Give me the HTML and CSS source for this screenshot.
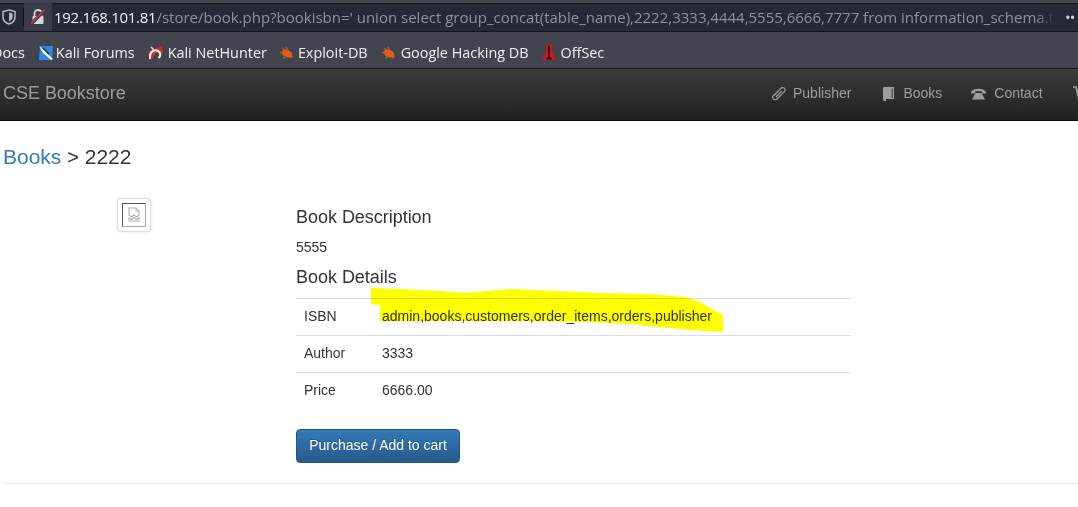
FILE: index.html
```html
<!DOCTYPE html>
<html lang="en">
<head>
<meta charset="utf-8">
<title>CSE Bookstore</title>
<link rel="stylesheet" href="styles.css">
</head>
<body>
<div class="urlbar">
  <svg class="shield" width="14" height="16" viewBox="0 0 14 16"><path d="M7 1 L13 2.5 V8 C13 11.5 10 14 7 15 C4 14 1 11.5 1 8 V2.5 Z" fill="none" stroke="#b9babd" stroke-width="1.5"/><path d="M7 3.6 L10.6 4.4 V8 C10.6 10 9 11.5 7 12.4 Z" fill="#b9babd"/></svg>
  <span class="sep"></span>
  <span class="lockbox">
    <svg width="16" height="18" viewBox="0 0 16 18"><path d="M4.5 8 V5.5 C4.5 3.2 6 2 8 2 C10 2 11.5 3.2 11.5 5.5 V8" fill="none" stroke="#d6d6d8" stroke-width="1.8"/><rect x="2.5" y="8" width="11" height="8" rx="1" fill="#d6d6d8"/><path d="M1 16 L15 2" stroke="#3a3d49" stroke-width="3.2"/><path d="M1 15.5 L15 1.5" stroke="#e22850" stroke-width="1.6"/></svg>
  </span>
  <div class="url"><span class="host">192.168.101.81</span>/store/book.php?bookisbn=' union select group_concat(table_name),2222,3333,4444,5555,6666,7777 from information_schema.ta</div>
  <span class="dots">••</span>
</div>
<div class="bookmarks">
  <span class="bm bm-docs">Docs</span>
  <span class="bm bm-forums">
    <svg width="16" height="16" viewBox="0 0 16 16"><path d="M2 1 H15 L14 15 H1 Z" fill="#2f86e6"/><path d="M1 1 L6 5 L15 14 L13 15 L5 8 Z" fill="#f2f2f2"/><path d="M5 3 L11 9" stroke="#222" stroke-width="1.2"/></svg>
    Kali Forums</span>
  <span class="bm bm-hunter">
    <svg width="16" height="16" viewBox="0 0 16 16"><path d="M1 6 L14 1 L15 9 L9 7 L3 15 L1 12 Z" fill="#d9252c"/><path d="M2 14 C1 7 6 4 10 6 C13 7.5 13 11 10.5 13" fill="none" stroke="#f4f4f4" stroke-width="2"/><path d="M3 2 L6 5" stroke="#ddd" stroke-width="1.4"/></svg>
    Kali NetHunter</span>
  <span class="bm bm-edb">
    <svg width="15" height="14" viewBox="0 0 15 14"><ellipse cx="8" cy="7.5" rx="5.5" ry="3.6" fill="#e0601a" transform="rotate(24 8 7.5)"/><path d="M1 7 L5 6 M3 2 L7 5 M7 1 L9 5 M4 12 L8 10 M11 12 L14 10" stroke="#d8571a" stroke-width="1.1"/></svg>
    Exploit-DB</span>
  <span class="bm bm-ghdb">
    <svg width="15" height="14" viewBox="0 0 15 14"><ellipse cx="8" cy="7.5" rx="5.5" ry="3.6" fill="#e0601a" transform="rotate(24 8 7.5)"/><path d="M1 7 L5 6 M3 2 L7 5 M7 1 L9 5 M4 12 L8 10 M11 12 L14 10" stroke="#d8571a" stroke-width="1.1"/></svg>
    Google Hacking DB</span>
  <span class="bm bm-off">
    <svg width="14" height="18" viewBox="0 0 14 18"><path d="M4 1 H10 L10 8 L14 16 H0 L4 8 Z" fill="#d3141c"/><path d="M7 2 V14 M4.5 14.5 H9.5" stroke="#200" stroke-width="1.8"/></svg>
    OffSec</span>
</div>
<nav class="navbar">
  <a class="brand">CSE Bookstore</a>
  <ul class="navlinks">
    <li class="nav-pub">
      <svg width="15" height="15" viewBox="0 0 15 15"><path d="M3 9.5 L9.5 2.6 C10.8 1.3 12.6 1.3 13.5 2.3 C14.4 3.3 14.2 4.9 13 6.1 L6 13 C5 14 3.4 14 2.4 13 C1.4 12 1.5 10.6 2.4 9.6 L8.8 3.4 M5 11 L11 5" fill="none" stroke="#9d9d9d" stroke-width="1.2"/></svg>
      Publisher</li>
    <li class="nav-books">
      <svg width="13" height="15" viewBox="0 0 13 15"><path d="M1 2 C1 1.2 1.8 1 3 1 H12 V13 H4 V15 H3 C1.8 15 1 14.4 1 13.2 Z" fill="#9d9d9d"/><path d="M9.5 2.5 H11 V12 H9.5 Z" fill="#555"/></svg>
      Books</li>
    <li class="nav-contact">
      <svg width="15" height="13" viewBox="0 0 15 13"><path d="M0 5 C2 0.5 13 0.5 15 5 V6.5 H11 V4.5 C9 3.8 6 3.8 4 4.5 V6.5 H0 Z" fill="#9d9d9d"/><path d="M4.5 6 H10.5 L14 12.5 H1 Z" fill="#9d9d9d"/></svg>
      Contact</li>
    <li class="nav-cart">
      <svg width="15" height="15" viewBox="0 0 15 15"><path d="M0 1 H3 L5 10 H13 L14.5 4 H4" fill="none" stroke="#9d9d9d" stroke-width="1.6"/><circle cx="6" cy="13" r="1.4" fill="#9d9d9d"/><circle cx="12" cy="13" r="1.4" fill="#9d9d9d"/></svg>
    </li>
  </ul>
</nav>
<main class="content">
  <p class="crumb"><a class="crumb-link">Books</a> <span class="crumb-sep">&gt;</span> 2222</p>
  <div class="book">
    <div class="image-col">
      <div class="thumb">
        <span class="broken">
          <svg width="16" height="16" viewBox="0 0 16 16"><path d="M3 1 H10 L13 4 V8 L10.5 10 L8 8 L5.5 10 L3 8 Z M3 11 L5.5 12.5 L8 10.5 L10.5 12.5 L13 10.5 V14 H3 Z" fill="none" stroke="#b4b4b4" stroke-width="1.1"/><path d="M10 1 V4 H13" fill="none" stroke="#b4b4b4" stroke-width="1"/></svg>
        </span>
      </div>
    </div>
    <div class="detail-col">
      <h4 class="h-desc">Book Description</h4>
      <p class="desc">5555</p>
      <h4 class="h-details">Book Details</h4>
      <div class="table-wrap">
        <table class="details">
          <tr><td class="label">ISBN</td><td>admin,books,customers,order_items,orders,publisher</td></tr>
          <tr><td class="label">Author</td><td>3333</td></tr>
          <tr><td class="label">Price</td><td>6666.00</td></tr>
        </table>
        <svg class="marker" width="360" height="50" viewBox="371 288 360 50"><path d="M371 289 L400 290 L440 292 L465 294 L510 290 L560 292 L600 294 L650 295 L685 298 L700 303 L712 310 L723 316 L723 333 L690 331 L660 328 L630 325 L590 323 L520 322 L380 322 L380 306 L371 305 Z" fill="#ffff00"/></svg>
      </div>
      <button class="buy"><span class="buy-label">Purchase / Add to cart</span></button>
    </div>
  </div>
  <hr class="rule">
</main>
</body>
</html>
```

FILE: styles.css
```css
* { box-sizing: border-box; }
html, body { margin: 0; padding: 0; }
body {
  width: 1078px;
  height: 507px;
  overflow: hidden;
  background: #fff;
  font-family: "Liberation Sans", Arial, sans-serif;
  font-size: 14px;
  color: #333;
}
.urlbar {
  height: 32px;
  display: flex;
  align-items: center;
  background: #262936;
  border-top: 3px solid #42454e;
  border-bottom: 1px solid #15161c;
  box-shadow: inset 0 1px 0 #1a1b20;
  font-family: "Open Sans", sans-serif;
  font-size: 15px;
  color: #8f929b;
  white-space: nowrap;
  overflow: hidden;
}
.shield { margin-left: 2px; flex: none; }
.sep { width: 1px; height: 18px; background: #0f1015; margin-left: 7px; flex: none; }
.lockbox {
  width: 28px;
  height: 28px;
  background: #3a3d49;
  display: flex;
  align-items: center;
  justify-content: center;
  flex: none;
}
.url {
  width: 1006px;
  margin-left: 2px;
  overflow: hidden;
  flex: none;
  -webkit-mask-image: linear-gradient(to right, #000 97.5%, transparent 99.5%);
  mask-image: linear-gradient(to right, #000 97.5%, transparent 99.5%);
}
.host { color: #f2f3f5; letter-spacing: -0.27px; }
.dots { margin-left: 5px; color: #d0d1d5; font-size: 15px; letter-spacing: -1px; flex: none; }
.bookmarks {
  height: 37px;
  display: flex;
  align-items: center;
  padding-top: 5px;
  background: #42454e;
  border-bottom: 1px solid #15161c;
  font-family: "Open Sans", sans-serif;
  font-size: 14.4px;
  color: #f0f1f3;
  white-space: nowrap;
  overflow: hidden;
}
.bm { display: flex; align-items: center; gap: 2px; flex: none; }
.bm-docs { margin-left: -8px; }
.bm-forums { margin-left: 13px; }
.bm-hunter { margin-left: 13px; gap: 4px; }
.bm-edb { margin-left: 12px; gap: 4px; }
.bm-ghdb { margin-left: 13px; gap: 5px; }
.bm-off { margin-left: 13px; gap: 5px; }
.navbar {
  height: 52px;
  display: flex;
  align-items: center;
  justify-content: space-between;
  padding-bottom: 3px;
  background: linear-gradient(to bottom, #3c3c3c, #222);
  border-bottom: 1px solid #0c0c0c;
  color: #9d9d9d;
  overflow: hidden;
}
.brand { margin-left: 3px; font-size: 18px; letter-spacing: -0.03px; }
.navlinks { list-style: none; display: flex; align-items: center; margin: 0; padding: 0; width: 307px; flex: none; }
.navlinks li { display: flex; align-items: center; gap: 7px; flex: none; }
.nav-books { margin-left: 31px; gap: 8px !important; }
.nav-contact { margin-left: 29px; gap: 8px !important; }
.nav-cart { margin-left: 30px; }
.content { padding: 0 0 0 3px; }
.crumb { margin: 24px 0 0; font-size: 21px; line-height: 24px; color: #333; }
.crumb-link { color: #337ab7; }
.crumb-sep { font-size: 20px; }
.book { display: flex; margin-top: 29px; }
.image-col { width: 293px; padding-left: 114px; flex: none; }
.thumb {
  width: 34px;
  height: 34px;
  border: 1px solid #ddd;
  border-radius: 4px;
  padding: 4px;
  box-shadow: 0 0 3px rgba(0,0,0,.12);
  background: #fff;
}
.broken {
  display: flex;
  align-items: center;
  justify-content: center;
  width: 24px;
  height: 24px;
  border: 1px solid;
  border-color: #555 #a8a8a8 #a8a8a8 #555;
}
.detail-col { width: 555px; flex: none; padding-top: 9px; }
h4 { margin: 0; font-size: 18px; font-weight: 400; line-height: 20px; letter-spacing: -0.03px; }
.desc { margin: 10px 0 0; line-height: 20px; }
.h-details { margin-top: 10px; }
.table-wrap { position: relative; margin-top: 11px; }
.details { width: 100%; border-collapse: collapse; }
.details td { height: 37px; padding: 7px 8px 9px; border-top: 1px solid #ddd; line-height: 20px; }
.details .label { width: 78px; }
.marker { position: absolute; left: 75px; top: -11px; mix-blend-mode: multiply; }
.buy {
  display: block;
  width: 164px;
  height: 34px;
  margin-top: 19px;
  padding: 0 0 2px;
  font: 14px "Liberation Sans", Arial, sans-serif;
  color: #fff;
  background: linear-gradient(to bottom, #337ab7, #265a88);
  border: 1px solid #245580;
  border-radius: 4px;
  text-shadow: 0 -1px 0 rgba(0,0,0,.2);
}
.rule { height: 1px; margin: 20px 0 0; border: 0; background: #eee; }
```
